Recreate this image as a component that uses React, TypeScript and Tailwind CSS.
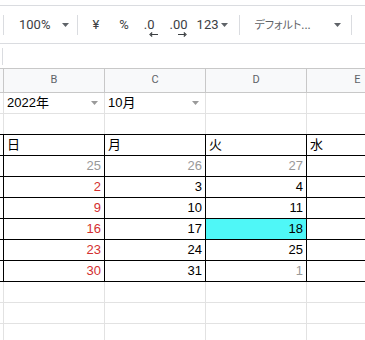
import React from 'react';

type Tone = 'k' | 'g' | 'r';
type Cell = { v: string; t: Tone; hi?: boolean };

const Caret = ({ color = '#5f6368' }: { color?: string }) => (
    <svg width="7" height="4" viewBox="0 0 7 4" className="shrink-0">
        <path d="M0 0h7L3.5 4z" fill={color} />
    </svg>
);

const Sep = () => <div className="h-[20px] w-px shrink-0 bg-[#dadce0]" />;

// the E column is cut off by the window, so its numbers never show
const weeks: Cell[][] = [
    [{ v: '25', t: 'g' }, { v: '26', t: 'g' }, { v: '27', t: 'g' }, { v: '', t: 'g' }],
    [{ v: '2', t: 'r' }, { v: '3', t: 'k' }, { v: '4', t: 'k' }, { v: '', t: 'k' }],
    [{ v: '9', t: 'r' }, { v: '10', t: 'k' }, { v: '11', t: 'k' }, { v: '', t: 'k' }],
    [{ v: '16', t: 'r' }, { v: '17', t: 'k' }, { v: '18', t: 'k', hi: true }, { v: '', t: 'k' }],
    [{ v: '23', t: 'r' }, { v: '24', t: 'k' }, { v: '25', t: 'k' }, { v: '', t: 'k' }],
    [{ v: '30', t: 'r' }, { v: '31', t: 'k' }, { v: '1', t: 'g' }, { v: '', t: 'g' }],
];

const toneClass: Record<Tone, string> = {
    k: 'text-black',
    g: 'text-[#999999]',
    r: 'text-[#d32f2f]',
};

const cellFont = "font-['Liberation_Sans','Noto_Sans_CJK_JP',sans-serif] text-[13px]";

// plain gray grid row
const GridRow = ({ children, last }: { children?: React.ReactNode[]; last?: boolean }) => {
    const cols = children ?? [null, null, null, null];
    return (
        <div className={`flex h-[21px] ${last ? 'border-b border-black' : 'border-b border-[#e2e2e2]'}`}>
            <div className="w-[4px] shrink-0 border-r border-[#e2e2e2]" />
            {cols.map((c, i) => (
                <div key={i} className={`flex w-[101px] shrink-0 items-center ${i < 3 ? 'border-r border-[#e2e2e2]' : ''}`}>
                    {c}
                </div>
            ))}
        </div>
    );
};

const Select = ({ label }: { label: string }) => (
    <div className={`flex w-full items-center justify-between pl-[3px] pr-[6px] ${cellFont} text-black`}>
        <span>{label}</span>
        <Caret color="#9a9a9a" />
    </div>
);

export default function App() {
    return (
        <div className="h-[340px] w-[365px] overflow-hidden bg-white">
            {/* toolbar */}
            <div className="mt-[5px] flex h-[39px] items-center border-y border-[#dadce0] font-['Roboto',sans-serif] text-[12px] text-[#3c4043]">
                <div className="ml-[3px]"><Sep /></div>
                <span className="ml-[15px] text-[13px]">100%</span>
                <div className="ml-[12px]"><Caret /></div>
                <div className="ml-[8px]"><Sep /></div>
                <span className="ml-[14px] text-[13px]">¥</span>
                <span className="ml-[20px] text-[13px]">%</span>
                <div className="relative ml-[15px] flex flex-col items-center">
                    <span className="text-[13px] leading-[14px]">.0</span>
                    <svg width="9" height="5" viewBox="0 0 9 5" className="absolute left-[5px] top-[14px]">
                        <path d="M9 2.5H2M3.2 0.5 1 2.5l2.2 2" stroke="#3c4043" strokeWidth="1.2" fill="none" />
                    </svg>
                </div>
                <div className="relative ml-[15px] flex flex-col items-center">
                    <span className="text-[13px] leading-[14px]">.00</span>
                    <svg width="9" height="5" viewBox="0 0 9 5" className="absolute left-[8px] top-[14px]">
                        <path d="M0 2.5h7M5.8 0.5 8 2.5l-2.2 2" stroke="#3c4043" strokeWidth="1.2" fill="none" />
                    </svg>
                </div>
                <span className="ml-[9px] text-[13px]">123</span>
                <div className="ml-[2px]"><Caret /></div>
                <div className="ml-[11px]"><Sep /></div>
                <span className="ml-[15px] font-['Noto_Sans_CJK_JP',sans-serif] text-[11px] text-[#5f6368] [font-feature-settings:'palt']">
                    デフォルト...
                </span>
                <div className="ml-[23px]"><Caret /></div>
                <div className="ml-[10px]"><Sep /></div>
            </div>

            {/* formula bar */}
            <div className="flex h-[24px] items-center">
                <div className="h-[17px] w-[3px] border-r border-[#dadce0]" />
            </div>

            {/* column headers */}
            <div className="flex h-[25px] border-y border-[#c8c8c8] bg-[#f8f9fa] font-['Roboto',sans-serif] text-[11px] text-[#5f6368]">
                <div className="w-[4px] shrink-0 border-r border-[#c8c8c8]" />
                {['B', 'C', 'D', 'E'].map((l, i) => (
                    <div key={l} className={`flex w-[101px] shrink-0 items-center justify-center ${i < 3 ? 'border-r border-[#c8c8c8]' : ''}`}>
                        {l}
                    </div>
                ))}
            </div>

            <GridRow>{[<Select key="y" label="2022年" />, <Select key="m" label="10月" />, null, null]}</GridRow>
            <GridRow last />

            {/* calendar table */}
            <div className={`${cellFont}`}>
                <div className="flex h-[21px] border-b border-black">
                    <div className="w-[4px] shrink-0 border-r border-black" />
                    {['日', '月', '火', '水'].map(d => (
                        <div key={d} className="flex w-[101px] shrink-0 items-center border-r border-black pl-[3px] text-black">
                            {d}
                        </div>
                    ))}
                </div>
                {weeks.map((w, ri) => (
                    <div key={ri} className="flex h-[21px] border-b border-black">
                        <div className="w-[4px] shrink-0 border-r border-black" />
                        {w.map((c, ci) => (
                            <div
                                key={ci}
                                className={`flex w-[101px] shrink-0 items-center justify-end border-r border-black pr-[3px] ${toneClass[c.t]} ${c.hi ? 'bg-[#4ff7f7]' : ''}`}
                            >
                                {c.v}
                            </div>
                        ))}
                    </div>
                ))}
            </div>

            <GridRow />
            <GridRow />
            <GridRow />
        </div>
    );
}
